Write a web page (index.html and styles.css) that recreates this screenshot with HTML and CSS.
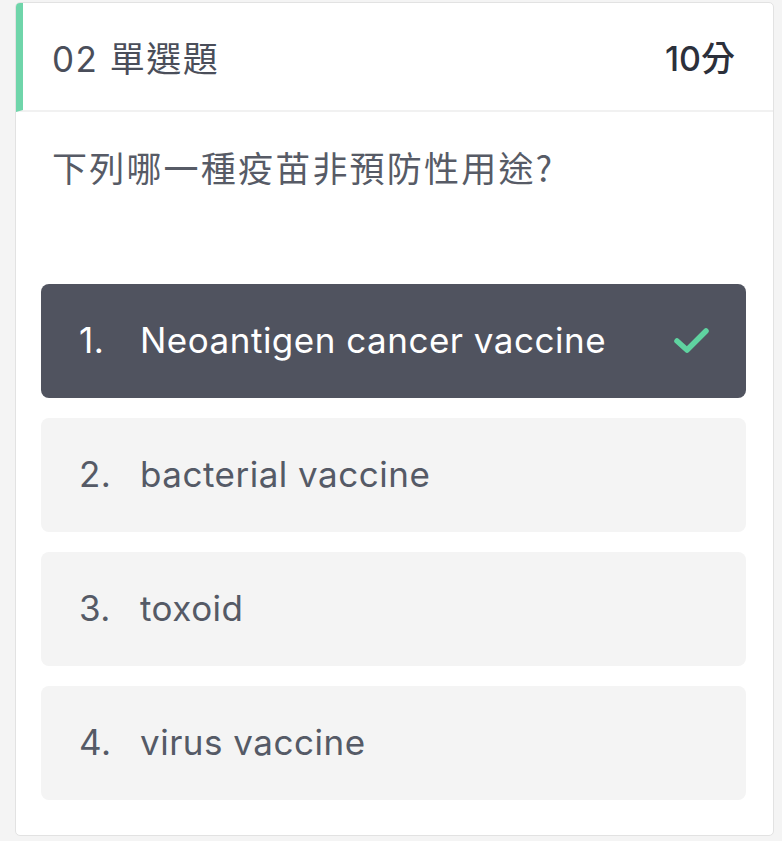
FILE: index.html
```html
<!DOCTYPE html>
<html>
<head>
<meta charset="utf-8">
<link rel="stylesheet" href="styles.css">
</head>
<body>
<div class="card">
  <div class="head">
    <div class="title">02 單選題</div>
    <div class="score">10分</div>
  </div>
  <div class="question">下列哪一種疫苗非預防性用途?</div>
  <div class="options">
    <div class="opt selected"><span class="num">1.</span><span class="label">Neoantigen cancer vaccine</span>
      <svg class="check" width="40" height="30" viewBox="0 0 40 30"><path d="M5 16 L15 25 L34 6" fill="none" stroke="#5fd3a0" stroke-width="5.5" stroke-linecap="round" stroke-linejoin="round"/></svg>
    </div>
    <div class="opt"><span class="num">2.</span><span class="label">bacterial vaccine</span></div>
    <div class="opt"><span class="num">3.</span><span class="label">toxoid</span></div>
    <div class="opt"><span class="num">4.</span><span class="label">virus vaccine</span></div>
  </div>
</div>
</body>
</html>
```
FILE: styles.css
```css
html, body { margin: 0; padding: 0; }
body {
  background: #f4f4f4;
  width: 782px;
  height: 841px;
  font-family: "Inter", "Noto Sans CJK TC", sans-serif;
  padding: 2px 0 0 15px;
  box-sizing: border-box;
}
.card {
  width: 759px;
  height: 834px;
  box-sizing: border-box;
  background: #fff;
  border: 1px solid #e2e2e2;
  border-radius: 5px;
  overflow: hidden;
}
.head {
  height: 109px;
  display: flex;
  align-items: center;
  justify-content: space-between;
  border-left: 7px solid #6fd5aa;
  border-bottom: 2px solid #f1f1f1;
  padding: 0 38px 0 29px;
  box-sizing: border-box;
}
.title {
  font-size: 35px;
  color: #4a4e5a;
  letter-spacing: 1.5px;
}
.score {
  font-size: 34px;
  color: #2c303b;
  font-weight: 500;
}
.question {
  font-family: "Noto Sans CJK TC", sans-serif;
  font-size: 35px;
  letter-spacing: 2.2px;
  color: #575b66;
  padding: 33px 0 0 36px;
  height: 140px;
  box-sizing: border-box;
  line-height: 44px;
}
.options {
  display: flex;
  flex-direction: column;
  gap: 20px;
  padding: 32px 27px 0 25px;
}
.opt {
  height: 114px;
  border-radius: 8px;
  background: #f4f4f4;
  display: flex;
  align-items: center;
  padding: 0 34px 2px 38px;
  box-sizing: border-box;
  font-size: 35px;
  letter-spacing: 0.5px;
  color: #555a66;
}
.opt .num { width: 61px; }
.opt .label { flex: 1; }
.opt.selected {
  background: #50535f;
  color: #fff;
}
.check { display: block; }
```
